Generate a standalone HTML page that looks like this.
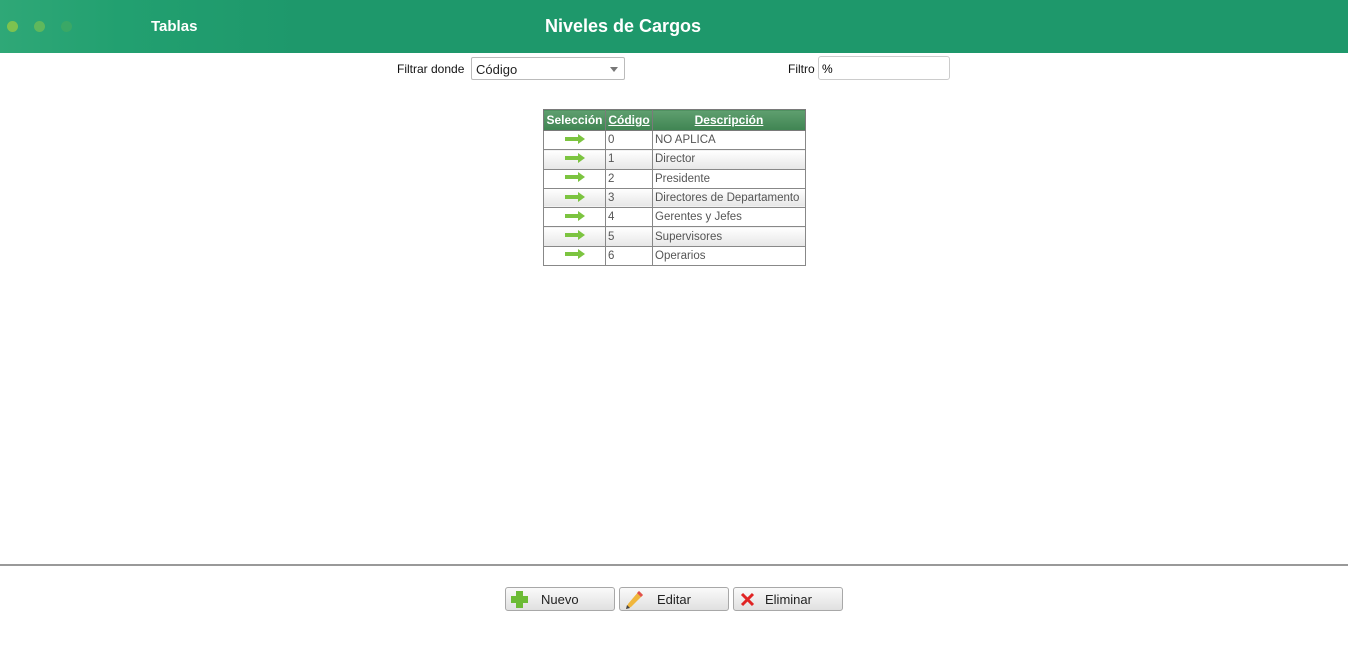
<!DOCTYPE html>
<html><head><meta charset="utf-8"><style>
*{box-sizing:border-box}
body{margin:0;width:1348px;height:657px;background:#fff;font-family:"Liberation Sans",sans-serif;position:relative;overflow:hidden}
.hdr{position:absolute;left:0;top:0;width:1348px;height:53px;background:linear-gradient(90deg,#2fa877 0,#22a070 120px,#1e986b 300px,#1e986b 100%)}
.dot{position:absolute;top:21px;width:11px;height:11px;border-radius:50%}
.t1{position:absolute;left:151px;top:18px;color:#fff;font:bold 15px "Liberation Sans",sans-serif}
.t2{position:absolute;left:545px;top:16px;color:#fff;font:bold 18px "Liberation Sans",sans-serif}
.lbl{position:absolute;font-size:12px;color:#111}
.sel{position:absolute;left:471px;top:57px;width:154px;height:23px;border:1px solid #bbb;border-radius:2px;font-size:13px;padding:4px 4px;color:#222}
.sel:after{content:"";position:absolute;right:6px;top:9px;border:4px solid transparent;border-top:5px solid #777}
.inp{position:absolute;left:818px;top:56px;width:132px;height:24px;border:1px solid #ccc;border-radius:3px;font-size:12px;padding:5px 3px}
table{position:absolute;left:543px;top:109px;width:262px;table-layout:fixed;border-collapse:collapse;font-size:11.5px;color:#555}
th{background:linear-gradient(#5f9f6f,#3f8452);color:#fff;font-size:12px;height:21px;padding:0;border:1px solid #7a7a7a;white-space:nowrap;overflow:hidden}
th u{color:#fff}
td{border:1px solid #888;height:19.3px;padding:0 2px;white-space:nowrap;overflow:hidden}
tr:nth-child(odd) td{background:linear-gradient(#fff,#e6e6e6)}
.ar{text-align:center}
.line{position:absolute;left:0;top:564px;width:1348px;border-top:2px solid #999}
.btn{position:absolute;top:587px;width:110px;height:24px;border:1px solid #a8a8a8;border-radius:3px;background:linear-gradient(#fafafa,#e0e0e0);font-size:13px;color:#222}
.btn span{position:absolute;top:4px}
</style></head><body>
<div class="hdr">
<div class="dot" style="left:7px;background:#7dc24f"></div>
<div class="dot" style="left:34px;background:#5fb85c"></div>
<div class="dot" style="left:61px;background:#3aa866"></div>
<div class="t1">Tablas</div><div class="t2">Niveles de Cargos</div></div>
<div class="lbl" style="left:397px;top:62px">Filtrar donde</div>
<div class="sel">Código</div>
<div class="lbl" style="left:788px;top:62px">Filtro</div>
<div class="inp">%</div>
<table>
<tr><th style="width:62px">Selección</th><th style="width:47px"><u>Código</u></th><th style="width:153px"><u>Descripción</u></th></tr>
<tr><td class="ar"><svg width="22" height="10"><path d="M1 3h13V0l7 5-7 5V7H1z" fill="#7cc440"/></svg></td><td>0</td><td>NO APLICA</td></tr>
<tr><td class="ar"><svg width="22" height="10"><path d="M1 3h13V0l7 5-7 5V7H1z" fill="#7cc440"/></svg></td><td>1</td><td>Director</td></tr>
<tr><td class="ar"><svg width="22" height="10"><path d="M1 3h13V0l7 5-7 5V7H1z" fill="#7cc440"/></svg></td><td>2</td><td>Presidente</td></tr>
<tr><td class="ar"><svg width="22" height="10"><path d="M1 3h13V0l7 5-7 5V7H1z" fill="#7cc440"/></svg></td><td>3</td><td>Directores de Departamento</td></tr>
<tr><td class="ar"><svg width="22" height="10"><path d="M1 3h13V0l7 5-7 5V7H1z" fill="#7cc440"/></svg></td><td>4</td><td>Gerentes y Jefes</td></tr>
<tr><td class="ar"><svg width="22" height="10"><path d="M1 3h13V0l7 5-7 5V7H1z" fill="#7cc440"/></svg></td><td>5</td><td>Supervisores</td></tr>
<tr><td class="ar"><svg width="22" height="10"><path d="M1 3h13V0l7 5-7 5V7H1z" fill="#7cc440"/></svg></td><td>6</td><td>Operarios</td></tr>
</table>
<div class="line"></div>
<div class="btn" style="left:505px"><svg style="position:absolute;left:4px;top:2px" width="19" height="19"><path d="M6 1h7v5h5v7h-5v5H6v-5H1V6h5z" fill="#6cbb35"/></svg><span style="left:35px">Nuevo</span></div>
<div class="btn" style="left:619px"><svg style="position:absolute;left:4px;top:2px" width="20" height="20"><path d="M15 1l4 4L7 17l-5 2 2-5z" fill="#f0b63c"/><path d="M15 1l4 4-2 2-4-4z" fill="#e05050"/><path d="M2 19l1-4 3 3z" fill="#444"/></svg><span style="left:37px">Editar</span></div>
<div class="btn" style="left:733px"><svg style="position:absolute;left:6px;top:4px" width="15" height="15"><path d="M2 2l11 11M13 2L2 13" stroke="#e02424" stroke-width="3"/></svg><span style="left:31px">Eliminar</span></div>
</body></html>
